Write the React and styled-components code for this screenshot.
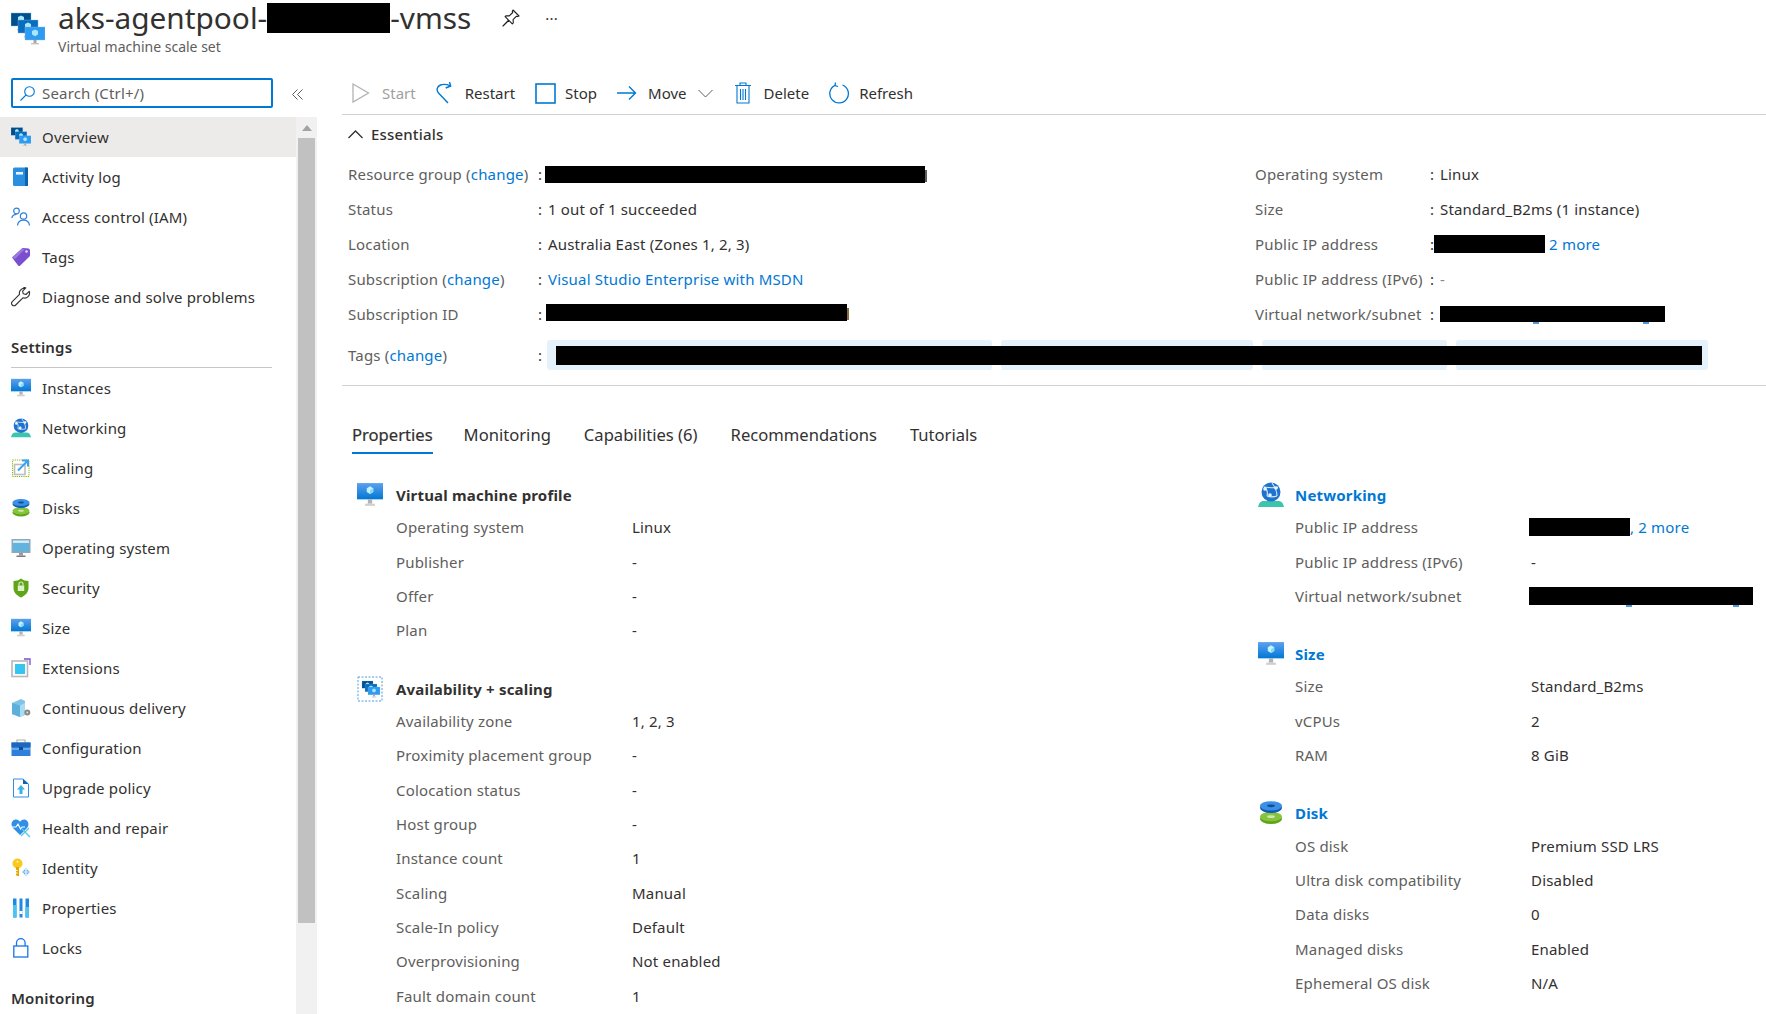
import React from 'react';
import styled, { createGlobalStyle } from 'styled-components';

const GlobalStyle = createGlobalStyle`
  html, body { margin: 0; padding: 0; background: #fff; }
  body {
    font-family: "Noto Sans", "Open Sans", "Liberation Sans", sans-serif;
    font-size: 15px;
    letter-spacing: 0.18px;
    color: #323130;
  }
`;

/* ---------- icons ---------- */

function Monitor({ size = 20 }) {
  return (
    <svg width={size} height={size} viewBox="0 0 24 24">
      <defs>
        <linearGradient id="mon" x1="0" y1="0" x2="0" y2="1">
          <stop offset="0" stopColor="#5ea0ef" />
          <stop offset="1" stopColor="#0078d4" />
        </linearGradient>
      </defs>
      <rect x="0" y="1" width="24" height="15" fill="url(#mon)" />
      <path d="M12 4l3 1.7v3.6L12 11l-3-1.7V5.7z" fill="#c3f1ff" />
      <path d="M12 7.5l3-1.8v3.6L12 11z" fill="#7fdcf5" />
      <path d="M10 16h4v4h-4z" fill="#b3b3b3" />
      <path d="M7.5 20h9v2h-9z" fill="#cfcfcf" />
    </svg>
  );
}

function MiniVm({ x, y, s, fill }) {
  return (
    <g transform={`translate(${x} ${y}) scale(${s})`}>
      <rect width="20" height="13" fill={fill} stroke="#7db8e8" strokeWidth=".4" />
      <path d="M10 2.5l3 1.6v3.4L10 9.2 7 7.5V4.1z" fill="#a8e6fa" />
      <path d="M8.5 13h3v3h-3z" fill="#a6a6a6" />
      <path d="M6 16h8v1.4H6z" fill="#c4c4c4" />
    </g>
  );
}

function Vmss({ size = 20 }) {
  return (
    <svg width={size} height={size} viewBox="0 0 34 34">
      <MiniVm x={0} y={1} s={1} fill="#004e8c" />
      <MiniVm x={7} y={8} s={1} fill="#0a6cbd" />
      <MiniVm x={14} y={15} s={1} fill="#2f9bf0" />
    </svg>
  );
}

function ScaleSet({ size = 26 }) {
  return (
    <svg width={size} height={size} viewBox="0 0 26 26">
      <rect x="1" y="1" width="24" height="24" fill="none" stroke="#4a9ae0" strokeWidth="1" strokeDasharray="2 1.5" />
      <MiniVm x={5} y={5} s={0.55} fill="#004e8c" />
      <MiniVm x={8} y={8} s={0.6} fill="#0a6cbd" />
      <MiniVm x={11} y={11} s={0.6} fill="#2f9bf0" />
    </svg>
  );
}

const ActivityLog = () => (
  <svg width="20" height="20" viewBox="0 0 20 20">
    <rect x="2" y="0.5" width="15" height="18.5" rx="1.5" fill="#2a8fe0" />
    <rect x="14" y="0.5" width="3" height="18.5" fill="#0f64ad" />
    <rect x="5" y="5" width="7" height="2.6" fill="#e8f4fd" />
  </svg>
);

const People = () => (
  <svg width="20" height="20" viewBox="0 0 20 20" fill="none" stroke="#2f80dc" strokeWidth="1.2">
    <circle cx="5.5" cy="4" r="2.8" />
    <path d="M0.8 11c.6-2.6 2.2-3.7 4.7-3.7" />
    <circle cx="12.5" cy="9" r="3.2" />
    <path d="M6.5 18.5c.4-3.6 2.7-5.4 6-5.4s5.6 1.8 6 5.4" />
  </svg>
);

const Tag = () => (
  <svg width="20" height="20" viewBox="0 0 20 20">
    <path d="M1 10.5L11 1.5c.4-.3 1-.5 1.5-.4l5 .4c.8.1 1.3.7 1.4 1.4l.2 5c0 .6-.2 1.1-.6 1.5L9 18.8c-.5.4-1.200.4-1.700 0z" fill="#7a4fcf" />
    <path d="M1 10.500L11 1.500 14 2 4 12z" fill="#9a78e0" />
    <circle cx="15.500" cy="4.500" r="1.300" fill="#e6dcfa" />
  </svg>
);

const Wrench = () => (
  <svg width="20" height="20" viewBox="0 0 20 20" fill="none" stroke="#323130" strokeWidth="1.1" strokeLinejoin="round">
    <path d="M13.500 1.200a5 5 0 0 0-5 6.200L1.300 14.600a2.400 2.400 0 0 0 3.400 3.400L11.900 10.800a5 5 0 0 0 6.300-6.500l-3.200 3.200-2.700-.7-.7-2.700 3.200-3.200c-.6-.2-1.300-.5-2-.500z" />
  </svg>
);

const Globe = ({ size = 20 }) => (
  <svg width={size} height={size} viewBox="0 0 26 26">
    <path d="M0 25c1-4.500 3-6 6-6h14c3 0 5 1.500 6 6z" fill="#3cc4ac" />
    <circle cx="13" cy="10" r="9.500" fill="#2072cf" />
    <path d="M6 5c3 2 4 5 3 9M20 5c-3 1-8 1-14 0M9 14c3 1 7 1 10 0M14 1c3 4 5 8 5 13" stroke="#d7ecfb" strokeWidth="1.100" fill="none" />
    <circle cx="7" cy="7" r="1.800" fill="#e8f5ff" />
    <circle cx="18" cy="6" r="1.800" fill="#e8f5ff" />
    <circle cx="12" cy="13" r="1.800" fill="#e8f5ff" />
  </svg>
);

const Scaling = () => (
  <svg width="20" height="20" viewBox="0 0 20 20">
    <rect x="1.500" y="2" width="16.500" height="16.500" fill="none" stroke="#7fba00" strokeWidth="1" strokeDasharray="1.200 1" />
    <rect x="3.500" y="6.500" width="10.500" height="10" fill="#fff" stroke="#bdbdbd" strokeWidth="1.600" />
    <path d="M7 12.500L16 3.500M11 2.500h6v6" stroke="#3aa0f3" strokeWidth="2" fill="none" />
  </svg>
);

const Disks = ({ size = 20 }) => (
  <svg width={size} height={size} viewBox="0 0 20 20">
    <ellipse cx="10" cy="14.500" rx="8.500" ry="4" fill="#5ea618" />
    <ellipse cx="10" cy="12.800" rx="8.500" ry="3.600" fill="#86c440" />
    <ellipse cx="10" cy="12.800" rx="3" ry="1" fill="#cfe8ad" />
    <ellipse cx="10" cy="6" rx="8.500" ry="4" fill="#0f5fb0" />
    <ellipse cx="10" cy="4.500" rx="8.500" ry="3.600" fill="#3b8fe6" />
    <ellipse cx="10" cy="4.500" rx="3" ry="1" fill="#0d4f96" />
  </svg>
);

const OsIcon = () => (
  <svg width="20" height="20" viewBox="0 0 20 20">
    <rect x="0.500" y="1" width="19" height="14" fill="#8fa9b8" />
    <rect x="2" y="2.500" width="16" height="11" fill="#62b4e0" />
    <rect x="2" y="2.500" width="16" height="2.400" fill="#d9edf8" />
    <path d="M8 15h4v2.500H8z" fill="#9b9b9b" />
    <path d="M5.500 17.500h9V19h-9z" fill="#7b7b7b" />
  </svg>
);

const Shield = () => (
  <svg width="20" height="20" viewBox="0 0 20 20">
    <path d="M10 0.500c2.500 1.800 4.500 2.400 7.500 2.500v7c0 4.500-3.200 7.500-7.500 9.500C5.700 17.500 2.500 14.500 2.500 10V3c3-.1 5-.7 7.500-2.500z" fill="#5ea618" />
    <rect x="6.800" y="7.500" width="6.400" height="5.500" fill="#dfeecd" />
    <path d="M8 7.500V6a2 2 0 0 1 4 0v1.500" fill="none" stroke="#dfeecd" strokeWidth="1.100" />
  </svg>
);

const Extensions = () => (
  <svg width="20" height="20" viewBox="0 0 20 20">
    <rect x="1" y="3" width="15.500" height="15.500" fill="#fff" stroke="#b8b8b8" strokeWidth="1.600" />
    <rect x="4" y="6" width="10" height="10" fill="#35c5f0" />
    <path d="M13 1h6v6" fill="none" stroke="#7a4fcf" strokeWidth="1.300" />
  </svg>
);

const Delivery = () => (
  <svg width="20" height="20" viewBox="0 0 20 20">
    <path d="M1 5l9-4 4 2v14l-5 2-8-3z" fill="#7fc4e6" />
    <path d="M1 5l8 2.500V19l-8-3z" fill="#5cb0d9" />
    <path d="M9 7.500L14 5v12l-5 2z" fill="#a8dcf2" />
    <circle cx="16.300" cy="14.500" r="3" fill="#8a8a8a" />
    <circle cx="16.300" cy="14.500" r="1" fill="#dcdcdc" />
  </svg>
);

const Toolbox = () => (
  <svg width="20" height="20" viewBox="0 0 20 20">
    <path d="M6 5V2h8v3" fill="none" stroke="#b0b0b0" strokeWidth="1.200" />
    <rect x="0.500" y="4.500" width="19" height="13.500" fill="#2f80dc" />
    <rect x="0.500" y="4.500" width="19" height="4.500" fill="#1d68bd" />
    <rect x="0.500" y="10.500" width="19" height="1" fill="#9fd0f5" />
    <rect x="8" y="9" width="4" height="3" fill="#0d4f96" />
  </svg>
);

const UpgradeDoc = () => (
  <svg width="20" height="20" viewBox="0 0 20 20">
    <path d="M2.500 1h9.500l5.500 5v13h-15z" fill="#fff" stroke="#2f8fe6" strokeWidth="1" />
    <path d="M12 1l5.500 5H12z" fill="#0f64ad" />
    <path d="M10 7l4 4.500h-2.500V16h-3v-4.500H6z" fill="#35b5e6" />
  </svg>
);

const Heart = () => (
  <svg width="20" height="20" viewBox="0 0 20 20">
    <path d="M9 17L2 10C-1 6.500 1 1.500 5 1.500c2 0 3.200 1 4 2.300.8-1.300 2-2.300 4-2.300 4 0 6 5 3 8.500z" fill="#2f8fe6" />
    <path d="M1 9h4l2-3 2.500 5 1.500-2h3" stroke="#fff" strokeWidth="1.100" fill="none" />
    <path d="M10 18l8-8M11 11l8 8" stroke="#58c8ec" strokeWidth="1.400" />
  </svg>
);

const KeyIcon = () => (
  <svg width="20" height="20" viewBox="0 0 20 20">
    <circle cx="6.500" cy="5.500" r="5" fill="#f8c91e" />
    <circle cx="6.500" cy="3.700" r="1" fill="#fff4bd" />
    <path d="M5 9h3v9H6l-1-1v-1.500h1.500v-1H5V13h1.500v-1H5z" fill="#e5a800" />
    <path d="M15 9.500l4.500 4.500-4.500 4.500-4.500-4.500z" fill="#cfe6f7" />
    <path d="M14 12l-1.500 2 1.500 2M16 12l1.500 2-1.500 2" stroke="#3d9be0" strokeWidth=".8" fill="none" />
  </svg>
);

const Bars = () => (
  <svg width="20" height="20" viewBox="0 0 20 20">
    <rect x="2" y="0.500" width="3.500" height="19" fill="#1e88e5" />
    <rect x="2" y="7" width="3.500" height="12.500" fill="#4fc3f0" />
    <rect x="8.500" y="0.500" width="3" height="19" fill="#1e88e5" />
    <rect x="8.500" y="13" width="3" height="3" fill="#fff" />
    <rect x="14.500" y="0.500" width="3.500" height="19" fill="#1e88e5" />
    <rect x="14.500" y="9" width="3.500" height="10.500" fill="#4fc3f0" />
  </svg>
);

const LockIcon = () => (
  <svg width="20" height="20" viewBox="0 0 20 20" fill="none" stroke="#1a73e8" strokeWidth="1.300">
    <rect x="2.800" y="8" width="14" height="11" fill="#fff" />
    <path d="M5.500 8V5a4.300 4.300 0 0 1 8.600 0v3" />
  </svg>
);

const SearchGlyph = () => (
  <svg width="17" height="17" viewBox="0 0 17 17" fill="none" stroke="#0078d4" strokeWidth="1.100">
    <circle cx="10.500" cy="6.500" r="4.800" />
    <path d="M7 10L1.500 15.500" />
  </svg>
);

const Collapse = () => (
  <svg width="13" height="13" viewBox="0 0 13 13" fill="none" stroke="#605e5c" strokeWidth="1">
    <path d="M6.500 1.500L1.500 6.500l5 5M11.500 1.500l-5 5 5 5" />
  </svg>
);

const PinIcon = () => (
  <svg width="20" height="20" viewBox="0 0 20 20" fill="none" stroke="#201f1e" strokeWidth="1.100" strokeLinejoin="round">
    <path d="M12 2l6 6-1.500.6-1-.4-3.400 3.400.2 3.200-1 1-3.700-3.700L2 18l5.800-5.600-3.700-3.700 1-1 3.200.2 3.400-3.400-.4-1z" />
  </svg>
);

const StartIcon = () => (
  <svg width="18" height="22" viewBox="0 0 18 22" fill="none" stroke="#b5b3b1" strokeWidth="1.300">
    <path d="M1 2l15.500 9L1 20z" />
  </svg>
);

const RestartIcon = () => (
  <svg width="16" height="22" viewBox="0 0 16 22" fill="none" stroke="#0078d4" strokeWidth="1.400">
    <path d="M12 21L2.500 11C0 8 1 4.500 4.500 3c3-1.200 6-.8 10 .8" />
    <path d="M13.500 0l1.200 4-5 2" />
  </svg>
);

const StopIcon = () => (
  <svg width="21" height="21" viewBox="0 0 21 21">
    <rect x="1" y="1" width="19" height="19" fill="none" stroke="#0078d4" strokeWidth="1.600" />
  </svg>
);

const MoveIcon = () => (
  <svg width="20" height="16" viewBox="0 0 20 16" fill="none" stroke="#0078d4" strokeWidth="1.400">
    <path d="M0 8h18.500M12 1.500L18.500 8 12 14.500" />
  </svg>
);

const ChevronIcon = () => (
  <svg width="17" height="9" viewBox="0 0 17 9" fill="none" stroke="#605e5c" strokeWidth="1">
    <path d="M.5 1l7 7 7-7" />
  </svg>
);

const DeleteIcon = () => (
  <svg width="16" height="22" viewBox="0 0 16 22" fill="none" stroke="#0078d4" strokeWidth="1.100">
    <path d="M0 3.500h16M5 3.500V1h6v2.500" />
    <path d="M2 3.500v17.500h12V3.500" />
    <path d="M5.500 7v11M8 7v11M10.500 7v11" />
  </svg>
);

const RefreshIcon = () => (
  <svg width="21" height="22" viewBox="0 0 21 22" fill="none" stroke="#0078d4" strokeWidth="1.300">
    <path d="M13.500 3a9.300 9.300 0 1 1-7.500.3" />
    <path d="M6.500 0.500L6 3.500l3 1" />
  </svg>
);

const CollapseUp = () => (
  <svg width="15" height="9" viewBox="0 0 15 9" fill="none" stroke="#323130" strokeWidth="1.300">
    <path d="M.5 8l7-7 7 7" />
  </svg>
);

/* ---------- layout ---------- */

const Page = styled.div`
  width: 1766px;
  height: 1014px;
  overflow: hidden;
  display: flex;
  flex-direction: column;
`;

const Header = styled.header`
  height: 72px;
  flex: none;
  display: flex;
  padding-left: 11px;
  box-sizing: border-box;
`;

const HeaderIcon = styled.div`
  width: 36px;
  padding-top: 12px;
  margin-right: 11px;
`;

const HeaderText = styled.div`
  display: flex;
  flex-direction: column;
`;

const TitleRow = styled.div`
  display: flex;
  align-items: center;
  height: 36px;
`;

const Title = styled.h1`
  margin: 0;
  font-size: 29.800px;
  font-weight: 400;
  letter-spacing: 0;
  line-height: 36px;
  color: #323130;
  display: flex;
  align-items: center;
`;

const Subtitle = styled.div`
  font-size: 14px;
  letter-spacing: 0;
  line-height: 18px;
  margin-top: 2px;
  color: #605e5c;
`;

const Redact = styled.span`
  display: inline-block;
  position: relative;
  flex: none;
  width: ${p => p.$w}px;
  height: ${p => p.$h || 18}px;
  margin-left: ${p => p.$ml || 0}px;
  margin-top: ${p => p.$mt || 0}px;
  background: #000;
  vertical-align: middle;
`;

// descenders of the covered link text that stick out under a redaction
const Tail = styled.i`
  position: absolute;
  left: ${p => p.$x}px;
  bottom: -2px;
  width: 6px;
  height: 2px;
  background: #4a9ae0;
`;

// last letter of the covered text that sticks out at the right of a redaction
const Edge = styled.i`
  position: absolute;
  right: -2px;
  top: 4px;
  width: 2px;
  height: 12px;
  background: ${p => p.$color};
`;

const HeaderAction = styled.span`
  display: inline-flex;
  margin-left: ${p => p.$ml}px;
  color: #323130;
`;

const Body = styled.div`
  flex: 1;
  display: flex;
  min-height: 0;
`;

const Sidebar = styled.aside`
  width: 317px;
  flex: none;
  margin-right: 25px;
  display: flex;
  flex-direction: column;
  min-height: 0;
`;

const SearchRow = styled.div`
  height: 45px;
  flex: none;
  padding: 6px 0 0 11px;
  box-sizing: border-box;
  display: flex;
  align-items: flex-start;
`;

const SearchBox = styled.div`
  width: 262px;
  height: 30px;
  box-sizing: border-box;
  border: 2px solid #0078d4;
  border-radius: 2px;
  display: flex;
  align-items: center;
  padding-left: 6px;
  gap: 6px;
  color: #605e5c;
`;

const CollapseBtn = styled.span`
  display: inline-flex;
  margin: 10px 0 0 18px;
`;

const SideBody = styled.div`
  flex: 1;
  display: flex;
  min-height: 0;
`;

const Nav = styled.nav`
  width: 296px;
  flex: none;
  overflow: hidden;
`;

const NavItem = styled.div`
  height: 40px;
  display: flex;
  align-items: center;
  gap: 11px;
  padding-left: 11px;
  background: ${p => (p.$active ? '#edebe9' : 'transparent')};
  color: #323130;
`;

const NavGroup = styled.div`
  margin: ${p => p.$top}px 24px 0 11px;
  height: ${p => (p.$line ? 35 : 30)}px;
  line-height: 30px;
  font-weight: 600;
  color: #323130;
  border-bottom: ${p => (p.$line ? '1px solid #c8c6c4' : 'none')};
`;

const Track = styled.div`
  width: 21px;
  flex: none;
  background: #f1f1f1;
  display: flex;
  flex-direction: column;
  align-items: center;
`;

const ArrowUp = styled.div`
  height: 21px;
  flex: none;
  display: flex;
  align-items: center;
  justify-content: center;
  &::before {
    content: '';
    border-left: 5px solid transparent;
    border-right: 5px solid transparent;
    border-bottom: 6px solid #a3a3a3;
  }
`;

const Thumb = styled.div`
  width: 17px;
  height: 785px;
  background: #c1c1c1;
`;

const Main = styled.main`
  flex: 1;
  min-width: 0;
`;

const Commands = styled.div`
  height: 43px;
  box-sizing: border-box;
  border-bottom: 1px solid #d2d0ce;
  display: flex;
  align-items: center;
  gap: 20px;
  padding: 0 0 0 10px;
  letter-spacing: 0;
`;

const Command = styled.div`
  display: flex;
  align-items: center;
  gap: ${p => p.$gap}px;
  color: ${p => (p.$off ? '#a19f9d' : '#323130')};
`;

const EssentialsHead = styled.div`
  height: 38px;
  display: flex;
  align-items: center;
  gap: 8px;
  padding-left: 6px;
  font-weight: 500;
`;

const EssentialsGrid = styled.div`
  display: grid;
  grid-template-columns: 907px 1fr;
  padding-left: 6px;
  padding-top: 4px;
`;

const EssentialRow = styled.div`
  height: 34.800px;
  display: grid;
  grid-template-columns: ${p => p.$label}px 10px 1fr;
  align-items: center;
`;

const Label = styled.span`
  color: #605e5c;
  white-space: nowrap;
`;

const Colon = styled.span`
  color: #323130;
`;

const Value = styled.span`
  color: #323130;
  white-space: nowrap;
  display: flex;
  align-items: center;
  margin-left: ${p => p.$ml || 0}px;
`;

const Link = styled.a`
  color: #0078d4;
  text-decoration: none;
  white-space: pre;
`;

const Muted = styled.span`
  color: #8a8886;
`;

const TagsRow = styled.div`
  display: grid;
  grid-template-columns: 190px 9px 1fr;
  align-items: center;
  padding: 9px 0 15px 6px;
  border-bottom: 1px solid #d2d0ce;
`;

const Chips = styled.div`
  position: relative;
  width: 1161px;
  display: flex;
  gap: 9px;
  height: 30px;
`;

const Chip = styled.div`
  width: ${p => p.$w}px;
  background: #e5f1fb;
  border-radius: 3px;
`;

const ChipCover = styled.div`
  position: absolute;
  left: 9px;
  right: 6px;
  top: 6px;
  height: 19px;
  background: #000;
`;

const Tabs = styled.div`
  display: flex;
  gap: 33px;
  padding: 33px 0 0 10px;
  height: 36px;
  letter-spacing: 0;
`;

const Tab = styled.div`
  font-size: 16.600px;
  line-height: 32px;
  height: 35px;
  box-sizing: border-box;
  color: #323130;
  margin-right: ${p => (p.$active ? '-2px' : '0')};
  -webkit-text-stroke: ${p => (p.$active ? '0.2px #323130' : '0')};
  border-bottom: ${p => (p.$active ? '2px solid #0078d4' : 'none')};
`;

const Details = styled.div`
  display: grid;
  grid-template-columns: 913px 1fr;
  padding-top: 26px;
`;

const DetailColumn = styled.div`
  display: flex;
  flex-direction: column;
  gap: 27px;
`;

const Section = styled.section`
  display: grid;
  grid-template-columns: ${p => p.$col}px 1fr;
`;

const SectionIcon = styled.div`
  padding-left: ${p => p.$pad}px;
  padding-top: 1px;
`;

const SectionTitle = styled.div`
  height: 29px;
  line-height: 29px;
  font-weight: 700;
  color: ${p => (p.$blue ? '#0078d4' : '#323130')};
`;

const SectionRow = styled.div`
  height: 34.400px;
  display: grid;
  grid-template-columns: ${p => p.$label}px 1fr;
  align-items: center;
`;

const Rows = styled.div``;

/* ---------- data ---------- */

const topNav = [
  ['Overview', <Vmss />, true],
  ['Activity log', <ActivityLog />],
  ['Access control (IAM)', <People />],
  ['Tags', <Tag />],
  ['Diagnose and solve problems', <Wrench />],
];

const settingsNav = [
  ['Instances', <Monitor />],
  ['Networking', <Globe />],
  ['Scaling', <Scaling />],
  ['Disks', <Disks />],
  ['Operating system', <OsIcon />],
  ['Security', <Shield />],
  ['Size', <Monitor />],
  ['Extensions', <Extensions />],
  ['Continuous delivery', <Delivery />],
  ['Configuration', <Toolbox />],
  ['Upgrade policy', <UpgradeDoc />],
  ['Health and repair', <Heart />],
  ['Identity', <KeyIcon />],
  ['Properties', <Bars />],
  ['Locks', <LockIcon />],
];

const chipWidths = [445, 252, 185, 252];
const tabs = ['Properties', 'Monitoring', 'Capabilities (6)', 'Recommendations', 'Tutorials'];

const vmProfile = [
  ['Operating system', 'Linux'],
  ['Publisher', '-'],
  ['Offer', '-'],
  ['Plan', '-'],
];

const availability = [
  ['Availability zone', '1, 2, 3'],
  ['Proximity placement group', '-'],
  ['Colocation status', '-'],
  ['Host group', '-'],
  ['Instance count', '1'],
  ['Scaling', 'Manual'],
  ['Scale-In policy', 'Default'],
  ['Overprovisioning', 'Not enabled'],
  ['Fault domain count', '1'],
];

const networking = [
  ['Public IP address', <><Redact $w={101} $ml={-2} /><Link href="#">, 2 more</Link></>],
  ['Public IP address (IPv6)', '-'],
  ['Virtual network/subnet', <Redact $w={224} $ml={-2}><Tail $x={97} /><Tail $x={204} /></Redact>],
];

const sizes = [
  ['Size', 'Standard_B2ms'],
  ['vCPUs', '2'],
  ['RAM', '8 GiB'],
];

const disk = [
  ['OS disk', 'Premium SSD LRS'],
  ['Ultra disk compatibility', 'Disabled'],
  ['Data disks', '0'],
  ['Managed disks', 'Enabled'],
  ['Ephemeral OS disk', 'N/A'],
];

function PropSection({ icon, title, rows, blue, col, pad, label }) {
  return (
    <Section $col={col}>
      <SectionIcon $pad={pad}>{icon}</SectionIcon>
      <Rows>
        <SectionTitle $blue={blue}>{title}</SectionTitle>
        {rows.map(([k, v]) => (
          <SectionRow key={k} $label={label}>
            <Label>{k}</Label>
            <Value>{v}</Value>
          </SectionRow>
        ))}
      </Rows>
    </Section>
  );
}

export default function App() {
  return (
    <Page>
      <GlobalStyle />
      <Header>
        <HeaderIcon><Vmss size={34} /></HeaderIcon>
        <HeaderText>
          <TitleRow>
            <Title>aks-agentpool-<Redact $w={123} $h={30} />-vmss</Title>
            <HeaderAction $ml={30}><PinIcon /></HeaderAction>
            <HeaderAction $ml={24}>···</HeaderAction>
          </TitleRow>
          <Subtitle>Virtual machine scale set</Subtitle>
        </HeaderText>
      </Header>
      <Body>
        <Sidebar>
          <SearchRow>
            <SearchBox><SearchGlyph />Search (Ctrl+/)</SearchBox>
            <CollapseBtn><Collapse /></CollapseBtn>
          </SearchRow>
          <SideBody>
            <Nav>
              {topNav.map(([name, icon, active]) => (
                <NavItem key={name} $active={active}>{icon}{name}</NavItem>
              ))}
              <NavGroup $top={15} $line>Settings</NavGroup>
              {settingsNav.map(([name, icon]) => (
                <NavItem key={name}>{icon}{name}</NavItem>
              ))}
              <NavGroup $top={15}>Monitoring</NavGroup>
            </Nav>
            <Track>
              <ArrowUp />
              <Thumb />
            </Track>
          </SideBody>
        </Sidebar>
        <Main>
          <Commands>
            <Command $off $gap={12}><StartIcon />Start</Command>
            <Command $gap={13}><RestartIcon />Restart</Command>
            <Command $gap={9}><StopIcon />Stop</Command>
            <Command $gap={11}><MoveIcon />Move<ChevronIcon /></Command>
            <Command $gap={13}><DeleteIcon />Delete</Command>
            <Command $gap={9}><RefreshIcon />Refresh</Command>
          </Commands>
          <EssentialsHead><CollapseUp />Essentials</EssentialsHead>
          <EssentialsGrid>
            <div>
              <EssentialRow $label={190}>
                <Label>Resource group (<Link href="#">change</Link>)</Label><Colon>:</Colon>
                <Value $ml={-3}><Redact $w={380} $h={17}><Edge $color="#605e5c" /></Redact></Value>
              </EssentialRow>
              <EssentialRow $label={190}>
                <Label>Status</Label><Colon>:</Colon><Value>1 out of 1 succeeded</Value>
              </EssentialRow>
              <EssentialRow $label={190}>
                <Label>Location</Label><Colon>:</Colon><Value>Australia East (Zones 1, 2, 3)</Value>
              </EssentialRow>
              <EssentialRow $label={190}>
                <Label>Subscription (<Link href="#">change</Link>)</Label><Colon>:</Colon>
                <Value><Link href="#">Visual Studio Enterprise with MSDN</Link></Value>
              </EssentialRow>
              <EssentialRow $label={190}>
                <Label>Subscription ID</Label><Colon>:</Colon>
                <Value $ml={-2}><Redact $w={301} $h={17} $mt={-3}><Edge $color="#8a6d3b" /></Redact></Value>
              </EssentialRow>
            </div>
            <div>
              <EssentialRow $label={175}>
                <Label>Operating system</Label><Colon>:</Colon><Value>Linux</Value>
              </EssentialRow>
              <EssentialRow $label={175}>
                <Label>Size</Label><Colon>:</Colon><Value>Standard_B2ms (1 instance)</Value>
              </EssentialRow>
              <EssentialRow $label={175}>
                <Label>Public IP address</Label><Colon>:</Colon>
                <Value $ml={-6}><Redact $w={111} /><Link href="#"> 2 more</Link></Value>
              </EssentialRow>
              <EssentialRow $label={175}>
                <Label>Public IP address (IPv6)</Label><Colon>:</Colon><Value><Muted>-</Muted></Value>
              </EssentialRow>
              <EssentialRow $label={175}>
                <Label>Virtual network/subnet</Label><Colon>:</Colon>
                <Value><Redact $w={225} $h={16}><Tail $x={93} /><Tail $x={203} /></Redact></Value>
              </EssentialRow>
            </div>
          </EssentialsGrid>
          <TagsRow>
            <Label>Tags (<Link href="#">change</Link>)</Label>
            <Colon>:</Colon>
            <Chips>
              {chipWidths.map((w, i) => <Chip key={i} $w={w} />)}
              <ChipCover />
            </Chips>
          </TagsRow>
          <Tabs>
            {tabs.map((t, i) => <Tab key={t} $active={i === 0}>{t}</Tab>)}
          </Tabs>
          <Details>
            <DetailColumn>
              <PropSection icon={<Monitor size={26} />} title="Virtual machine profile" rows={vmProfile} col={54} pad={15} label={236} />
              <PropSection icon={<ScaleSet />} title="Availability + scaling" rows={availability} col={54} pad={15} label={236} />
            </DetailColumn>
            <DetailColumn>
              <PropSection blue icon={<Globe size={26} />} title="Networking" rows={networking} col={40} pad={3} label={236} />
              <PropSection blue icon={<Monitor size={26} />} title="Size" rows={sizes} col={40} pad={3} label={236} />
              <PropSection blue icon={<Disks size={26} />} title="Disk" rows={disk} col={40} pad={3} label={236} />
            </DetailColumn>
          </Details>
        </Main>
      </Body>
    </Page>
  );
}
